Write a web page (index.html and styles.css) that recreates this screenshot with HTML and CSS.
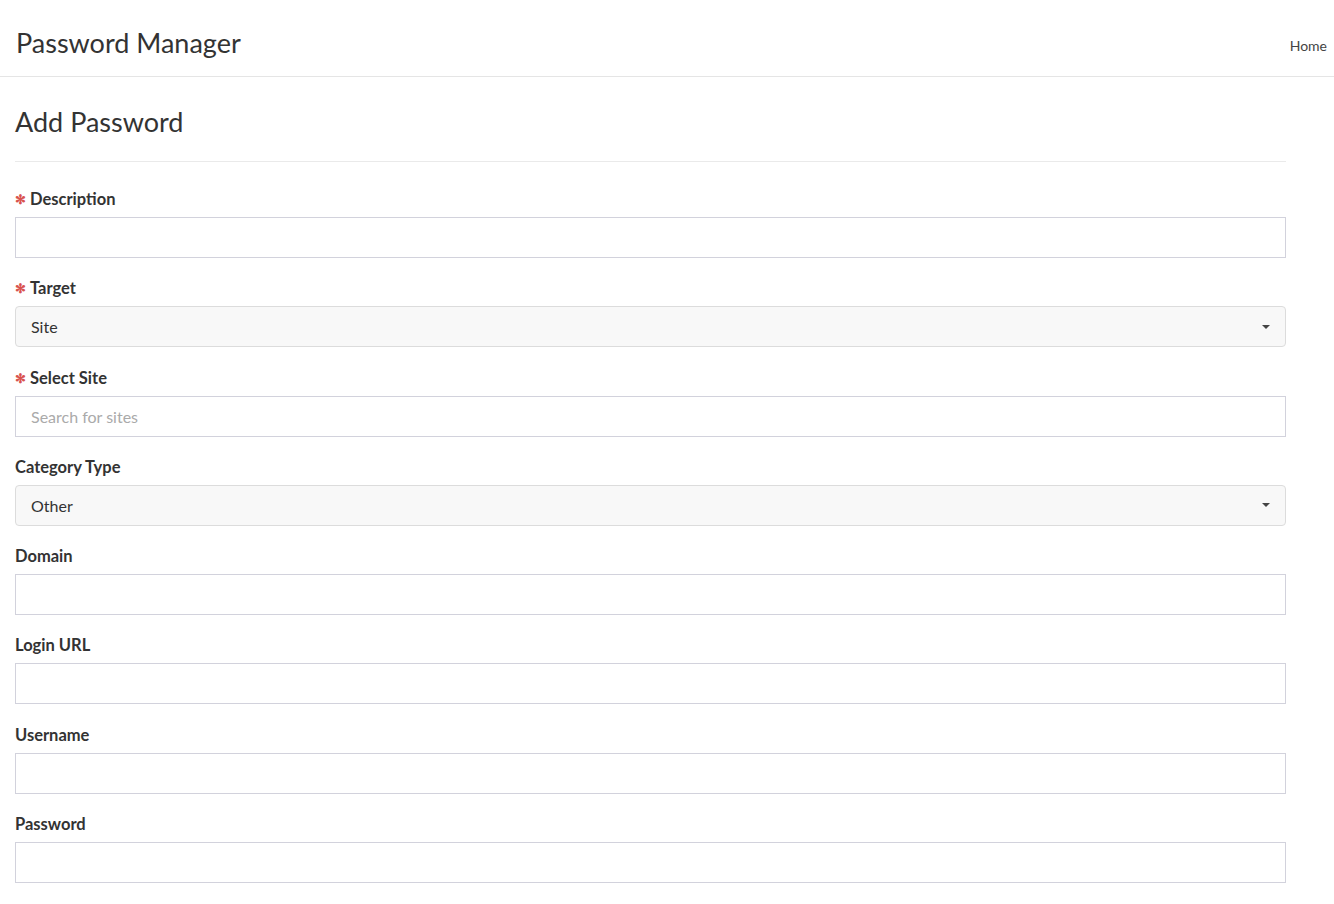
FILE: index.html
```html
<!DOCTYPE html>
<html lang="en">
<head>
    <meta charset="UTF-8">
    <title>Password Manager</title>
    <link rel="stylesheet" href="styles.css">
</head>
<body>

<header class="topbar">
    <div class="brand">Password Manager</div>
    <nav class="nav">
        <a href="#">Home</a>
    </nav>
</header>

<main class="page">
    <h1 class="page-title">Add Password</h1>
    <hr class="divider">

    <form class="pw-form">
        <div class="field">
            <label class="required" for="description">Description</label>
            <input type="text" id="description">
        </div>

        <div class="field">
            <label class="required" for="target">Target</label>
            <div class="select">
                <span>Site</span>
                <span class="caret"></span>
            </div>
        </div>

        <div class="field">
            <label class="required" for="site">Select Site</label>
            <input type="text" id="site" placeholder="Search for sites">
        </div>

        <div class="field">
            <label for="category">Category Type</label>
            <div class="select">
                <span>Other</span>
                <span class="caret"></span>
            </div>
        </div>

        <div class="field">
            <label for="domain">Domain</label>
            <input type="text" id="domain">
        </div>

        <div class="field">
            <label for="loginUrl">Login URL</label>
            <input type="text" id="loginUrl">
        </div>

        <div class="field">
            <label for="username">Username</label>
            <input type="text" id="username">
        </div>

        <div class="field">
            <label for="password">Password</label>
            <input type="text" id="password">
        </div>
    </form>
</main>

</body>
</html>
```

FILE: styles.css
```css
:root {
    --text: #333333;
    --border: #d2d2dc;
    --select-bg: #f8f8f8;
    --select-border: #dcdcdc;
    --required: #d9534f;
}

body {
    margin: 0;
    font-family: Lato, 'Noto Sans', sans-serif;
    color: var(--text);
    background: #ffffff;
}

.topbar {
    height: 77px;
    display: flex;
    align-items: center;
    justify-content: space-between;
    padding: 0 7px 0 16px;
    border-bottom: 1px solid #e5e5e5;
    box-sizing: border-box;
}

.brand {
    font-size: 27px;
    font-weight: 400;
    padding-top: 8px;
}

.nav a {
    font-size: 14px;
    color: #444;
    text-decoration: none;
    padding-top: 14px;
    display: block;
}

.page {
    width: 1271px;
    margin-left: 15px;
}

.page-title {
    font-size: 27px;
    font-weight: 400;
    margin: 28px 0 0;
    line-height: 33px;
}

.divider {
    border: 0;
    border-top: 1px solid #eaeaea;
    margin: 23px 0 26px;
}

.field {
    margin-bottom: 19.3px;
}

.field label {
    display: block;
    font-size: 16.5px;
    font-weight: 700;
    line-height: 22px;
    margin-bottom: 7px;
}

.required::before {
    content: "\273B";
    color: var(--required);
    font-size: 13px;
    margin-right: 4px;
    vertical-align: 1px;
}

input[type="text"] {
    display: block;
    width: 100%;
    height: 41px;
    box-sizing: border-box;
    border: 1px solid var(--border);
    padding: 0 15px;
    font-family: inherit;
    font-size: 16px;
    color: var(--text);
    margin: 0;
}

input::placeholder {
    color: #aaaaaa;
}

.select {
    display: flex;
    align-items: center;
    justify-content: space-between;
    height: 41px;
    box-sizing: border-box;
    border: 1px solid var(--select-border);
    border-radius: 4px;
    background: var(--select-bg);
    padding: 0 15px;
    font-size: 16px;
}

.caret {
    width: 0;
    height: 0;
    border-left: 4px solid transparent;
    border-right: 4px solid transparent;
    border-top: 4px solid #444;
}
```
